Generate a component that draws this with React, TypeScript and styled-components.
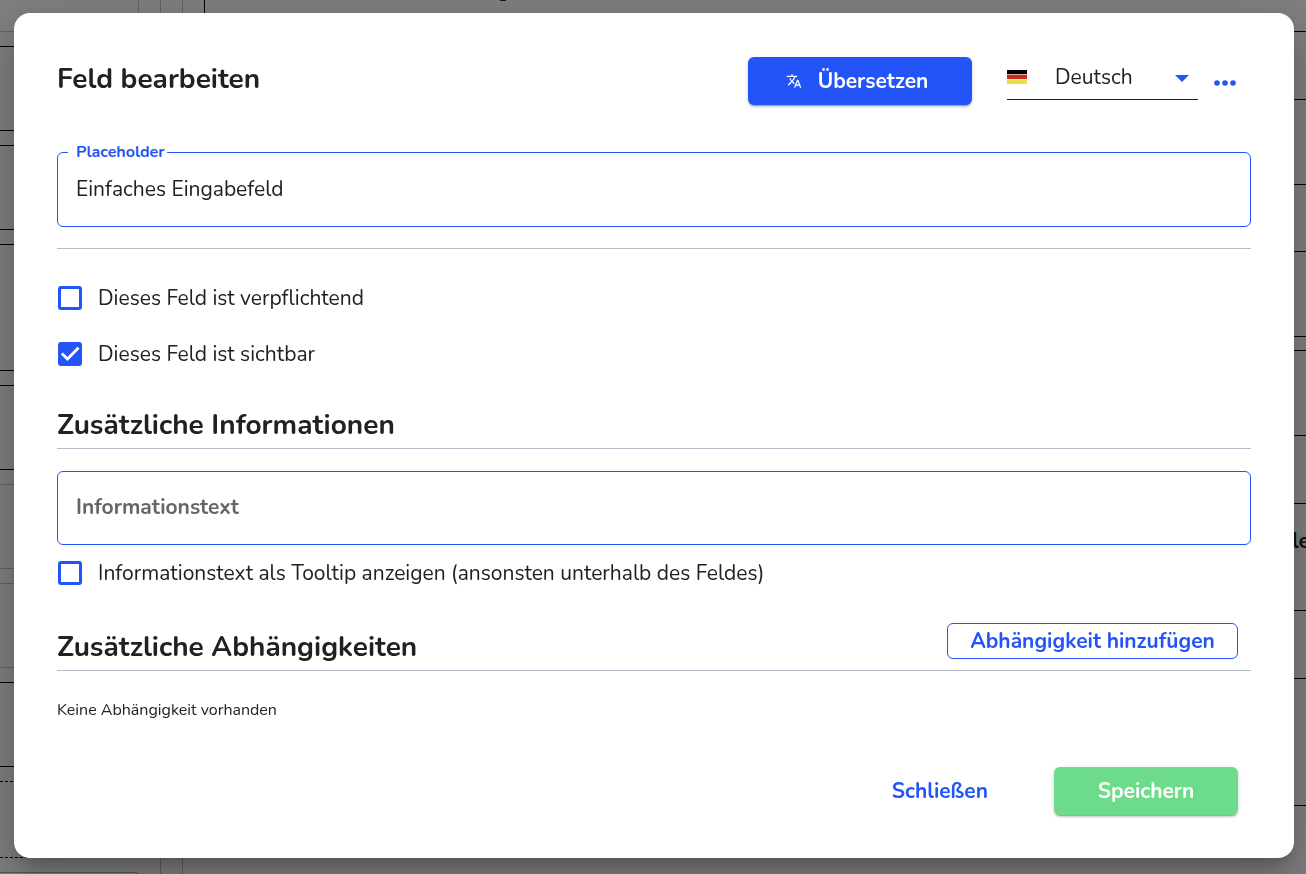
import React, { useState } from "react";
import styled, { createGlobalStyle } from "styled-components";

const blue = "#2254f8";
const ink = "#212121";
const rule = "#b8b9c9";

const GlobalStyle = createGlobalStyle`
  *, *::before, *::after { box-sizing: border-box; }
  html, body, #root { height: 100%; }
  body {
    margin: 0;
    overflow: hidden;
    background: #fff;
    color: ${ink};
    font-family: Nunito, Lato, sans-serif;
    font-size: 21px;
    line-height: 28px;
  }
  button, input, select { font: inherit; color: inherit; }
`;

/* Form builder behind the dialog */
const Builder = styled.div`
  display: grid;
  grid-template-columns: 139px 21px 23px 21px 1fr;
  height: 100vh;
  overflow: hidden;
`;

const Palette = styled.div`
  display: flex;
  flex-direction: column;
  gap: 14px;
`;

const PaletteHead = styled.div`
  flex: none;
  height: 32px;
  border: solid #c4c4c4;
  border-width: 0 1px 1px 0;
`;

const PaletteItem = styled.div<{ $height: number; $line?: string; $dashed?: boolean }>`
  flex: none;
  height: ${(p) => p.$height}px;
  border: 1px ${(p) => (p.$dashed ? "dashed" : "solid")} ${(p) => p.$line ?? "#000"};
  border-left: 0;
  border-radius: 0 4px 4px 0;
`;

const Splitter = styled.div`
  grid-column: 3;
  border: solid #c4c4c4;
  border-width: 0 1px;
`;

const Canvas = styled.div`
  grid-column: 5;
  display: flex;
  flex-direction: column;
  overflow: hidden;
`;

const CanvasHead = styled.div`
  display: flex;
  flex: none;
  align-items: flex-end;
  height: 32px;
  padding: 0 0 27px 292px;
  border: solid #000;
  border-width: 0 0 1px 1px;
  font-weight: 700;
`;

const CanvasRow = styled.div<{ $height: number }>`
  display: flex;
  flex: none;
  align-items: flex-start;
  justify-content: flex-end;
  height: ${(p) => p.$height}px;
  border-bottom: 1px solid #000;
`;

const RowLabel = styled.span`
  margin-right: -4px;
  padding-top: 23px;
  font-weight: 700;
`;

/* Dialog */
const Overlay = styled.div`
  position: fixed;
  inset: 0;
  padding: 13px 12px 16px 14px;
  background: rgba(0, 0, 0, 0.5);
`;

const Dialog = styled.form`
  display: flex;
  flex-direction: column;
  height: 100%;
  padding: 44px 43px 43px;
  border-radius: 16px;
  background: #fff;
  box-shadow: 0 11px 15px -7px rgba(0, 0, 0, 0.2), 0 24px 38px 3px rgba(0, 0, 0, 0.14),
    0 9px 46px 8px rgba(0, 0, 0, 0.12);
`;

const Header = styled.header`
  display: flex;
  align-items: flex-start;
  height: 48px;
`;

const Title = styled.h1`
  flex: 1;
  margin: 4px 0 0;
  font-size: 28px;
  line-height: 36px;
`;

const Solid = styled.button<{ $color: string; $width: number }>`
  display: flex;
  align-items: center;
  justify-content: center;
  gap: 16px;
  width: ${(p) => p.$width}px;
  height: 48px;
  padding: 0;
  border: 0;
  border-radius: 6px;
  background: ${(p) => p.$color};
  box-shadow: 0 3px 1px -2px rgba(0, 0, 0, 0.2), 0 2px 2px 0 rgba(0, 0, 0, 0.14),
    0 1px 5px 0 rgba(0, 0, 0, 0.12);
  color: #fff;
  font-weight: 700;

  svg { margin-left: -6px; }
`;

const Language = styled.label`
  display: flex;
  align-items: center;
  width: 191px;
  height: 43px;
  margin-left: 35px;
  padding-bottom: 2px;
  border-bottom: 1px solid ${ink};
`;

const LanguageSelect = styled.select`
  flex: 1;
  appearance: none;
  margin-left: 28px;
  padding: 0;
  border: 0;
  background: none;
  outline: 0;
`;

const Caret = styled.span`
  width: 0;
  margin: 2px 9px 0 0;
  border: solid transparent;
  border-width: 7px 7px 0;
  border-top-color: ${blue};
`;

const More = styled.button`
  display: flex;
  align-items: center;
  height: 48px;
  margin: 2px 15px 0 16px;
  padding: 0;
  border: 0;
  background: none;
`;

const Outline = styled.div<{ $top: number; $height: number }>`
  position: relative;
  height: ${(p) => p.$height}px;
  margin-top: ${(p) => p.$top}px;
  padding: 0 18px;
  border: 1px solid ${blue};
  border-radius: 6px;
`;

const FloatingLabel = styled.label`
  position: absolute;
  top: -12px;
  left: 10px;
  padding: 0 2px 0 8px;
  background: #fff;
  color: ${blue};
  font-size: 16px;
  font-weight: 700;
  line-height: 22px;
`;

const TextInput = styled.input`
  display: block;
  width: 100%;
  height: calc(100% - 2px);
  padding: 0;
  border: 0;
  background: none;
  outline: 0;

  &::placeholder {
    color: #666;
    font-weight: 700;
    opacity: 1;
  }
`;

const Divider = styled.hr`
  width: 100%;
  margin: 21px 0 0;
  border: 0;
  border-top: 1px solid ${rule};
`;

const Check = styled.label<{ $top: number }>`
  display: flex;
  align-items: center;
  gap: 16px;
  height: 28px;
  margin-top: ${(p) => p.$top}px;
  padding-left: 1px;
`;

const CheckBox = styled.span`
  display: grid;
  width: 24px;
  height: 24px;

  & > * { grid-area: 1 / 1; }
  svg { pointer-events: none; }
`;

const CheckInput = styled.input`
  appearance: none;
  width: 24px;
  height: 24px;
  margin: 0;
  border: 3px solid ${blue};
  border-radius: 3px;

  &:checked { background: ${blue}; }
  &:not(:checked) + svg { visibility: hidden; }
`;

const SectionHead = styled.div<{ $top: number }>`
  display: flex;
  align-items: flex-end;
  justify-content: space-between;
  height: 48px;
  margin-top: ${(p) => p.$top}px;
  border-bottom: 1px solid ${rule};
`;

const SectionTitle = styled.h2`
  margin: 0 0 5px;
  font-size: 28px;
  line-height: 36px;
`;

const AddButton = styled.button`
  width: 291px;
  height: 36px;
  margin: 0 13px 11px 0;
  padding: 0;
  border: 1px solid ${blue};
  border-radius: 6px;
  background: #fff;
  color: ${blue};
  font-weight: 700;
`;

const Empty = styled.p`
  margin: 28px 0 0;
  font-size: 16px;
  line-height: 22px;
`;

const Actions = styled.footer`
  display: flex;
  justify-content: flex-end;
  align-items: center;
  gap: 42px;
  margin-top: auto;
  padding-right: 13px;
`;

const Plain = styled.button`
  height: 48px;
  padding: 0 24px;
  border: 0;
  background: none;
  color: ${blue};
  font-weight: 700;
`;

function CheckRow({ label, top, initial = false }: { label: string; top: number; initial?: boolean }) {
  const [checked, setChecked] = useState(initial);
  return (
    <Check $top={top}>
      <CheckBox>
        <CheckInput type="checkbox" checked={checked} onChange={(e) => setChecked(e.target.checked)} />
        <svg width="24" height="24" viewBox="0 0 24 24" fill="none" stroke="#fff" strokeWidth="2.8">
          <path d="M3.8 11.4 9.5 17 20.5 5.8" />
        </svg>
      </CheckBox>
      {label}
    </Check>
  );
}

const paletteItems = [
  { height: 85 },
  { height: 85 },
  { height: 127 },
  { height: 85 },
  { height: 85, line: "#c4c4c4" },
  { height: 85, line: "#c4c4c4" },
  { height: 85 },
  { height: 77, dashed: true },
  { height: 85, line: "#8fc98a" },
];

const canvasRows = [68, 85, 67, 85, 14, 85, 68, 107, 68, 127];

export default function App() {
  const [text, setText] = useState("Einfaches Eingabefeld");
  return (
    <>
      <GlobalStyle />
      <Builder aria-hidden="true">
        <Palette>
          <PaletteHead />
          {paletteItems.map((item, i) => (
            <PaletteItem key={i} $height={item.height} $line={item.line} $dashed={item.dashed} />
          ))}
        </Palette>
        <Splitter />
        <Canvas>
          <CanvasHead>g</CanvasHead>
          {canvasRows.map((height, i) => (
            <CanvasRow key={i} $height={height}>
              {i === 7 && <RowLabel>le</RowLabel>}
            </CanvasRow>
          ))}
        </Canvas>
      </Builder>
      <Overlay>
        <Dialog role="dialog" aria-labelledby="dialog-title" onSubmit={(e) => e.preventDefault()}>
          <Header>
            <Title id="dialog-title">Feld bearbeiten</Title>
            <Solid type="button" $color={blue} $width={224}>
              <svg width="16" height="16" viewBox="0 0 24 24" fill="#fff" aria-hidden="true">
                <path d="M12.87 15.07l-2.54-2.51.03-.03c1.74-1.94 2.98-4.17 3.71-6.53H17V4h-7V2H8v2H1v1.99h11.17C11.5 7.92 10.44 9.75 9 11.35 8.07 10.32 7.3 9.19 6.69 8h-2c.73 1.63 1.73 3.17 2.98 4.56l-5.09 5.02L4 19l5-5 3.11 3.11.76-2.04zM18.5 10h-2L12 22h2l1.12-3h4.75L21 22h2l-4.5-12zm-2.62 7l1.62-4.33L19.12 17h-3.24z" />
              </svg>
              Übersetzen
            </Solid>
            <Language>
              <svg width="20" height="14" viewBox="0 0 20 14" aria-hidden="true">
                <path fill="#000" d="M0 0h20v4H0z" />
                <path fill="#e0a9a5" d="M0 4h20v1H0z" />
                <path fill="#cb2b20" d="M0 5h20v4H0z" />
                <path fill="#f5e9c8" d="M0 9h20v1H0z" />
                <path fill="#e8e04a" d="M0 10h20v4H0z" />
              </svg>
              <LanguageSelect aria-label="Sprache" defaultValue="de">
                <option value="de">Deutsch</option>
              </LanguageSelect>
              <Caret />
            </Language>
            <More type="button" aria-label="Mehr">
              <svg width="22" height="6" viewBox="0 0 22 6" fill={blue}>
                <circle cx="3" cy="3" r="2.8" />
                <circle cx="11" cy="3" r="2.8" />
                <circle cx="19" cy="3" r="2.8" />
              </svg>
            </More>
          </Header>

          <Outline $top={47} $height={75}>
            <FloatingLabel htmlFor="placeholder">Placeholder</FloatingLabel>
            <TextInput id="placeholder" value={text} onChange={(e) => setText(e.target.value)} />
          </Outline>
          <Divider />
          <CheckRow top={35} label="Dieses Feld ist verpflichtend" />
          <CheckRow top={28} label="Dieses Feld ist sichtbar" initial />

          <SectionHead $top={33}>
            <SectionTitle>Zusätzliche Informationen</SectionTitle>
          </SectionHead>
          <Outline $top={22} $height={74}>
            <TextInput aria-label="Informationstext" placeholder="Informationstext" />
          </Outline>
          <CheckRow top={14} label="Informationstext als Tooltip anzeigen (ansonsten unterhalb des Feldes)" />

          <SectionHead $top={36}>
            <SectionTitle>Zusätzliche Abhängigkeiten</SectionTitle>
            <AddButton type="button">Abhängigkeit hinzufügen</AddButton>
          </SectionHead>
          <Empty>Keine Abhängigkeit vorhanden</Empty>

          <Actions>
            <Plain type="button">Schließen</Plain>
            <Solid type="submit" $color="#6cdc8b" $width={184}>
              Speichern
            </Solid>
          </Actions>
        </Dialog>
      </Overlay>
    </>
  );
}
